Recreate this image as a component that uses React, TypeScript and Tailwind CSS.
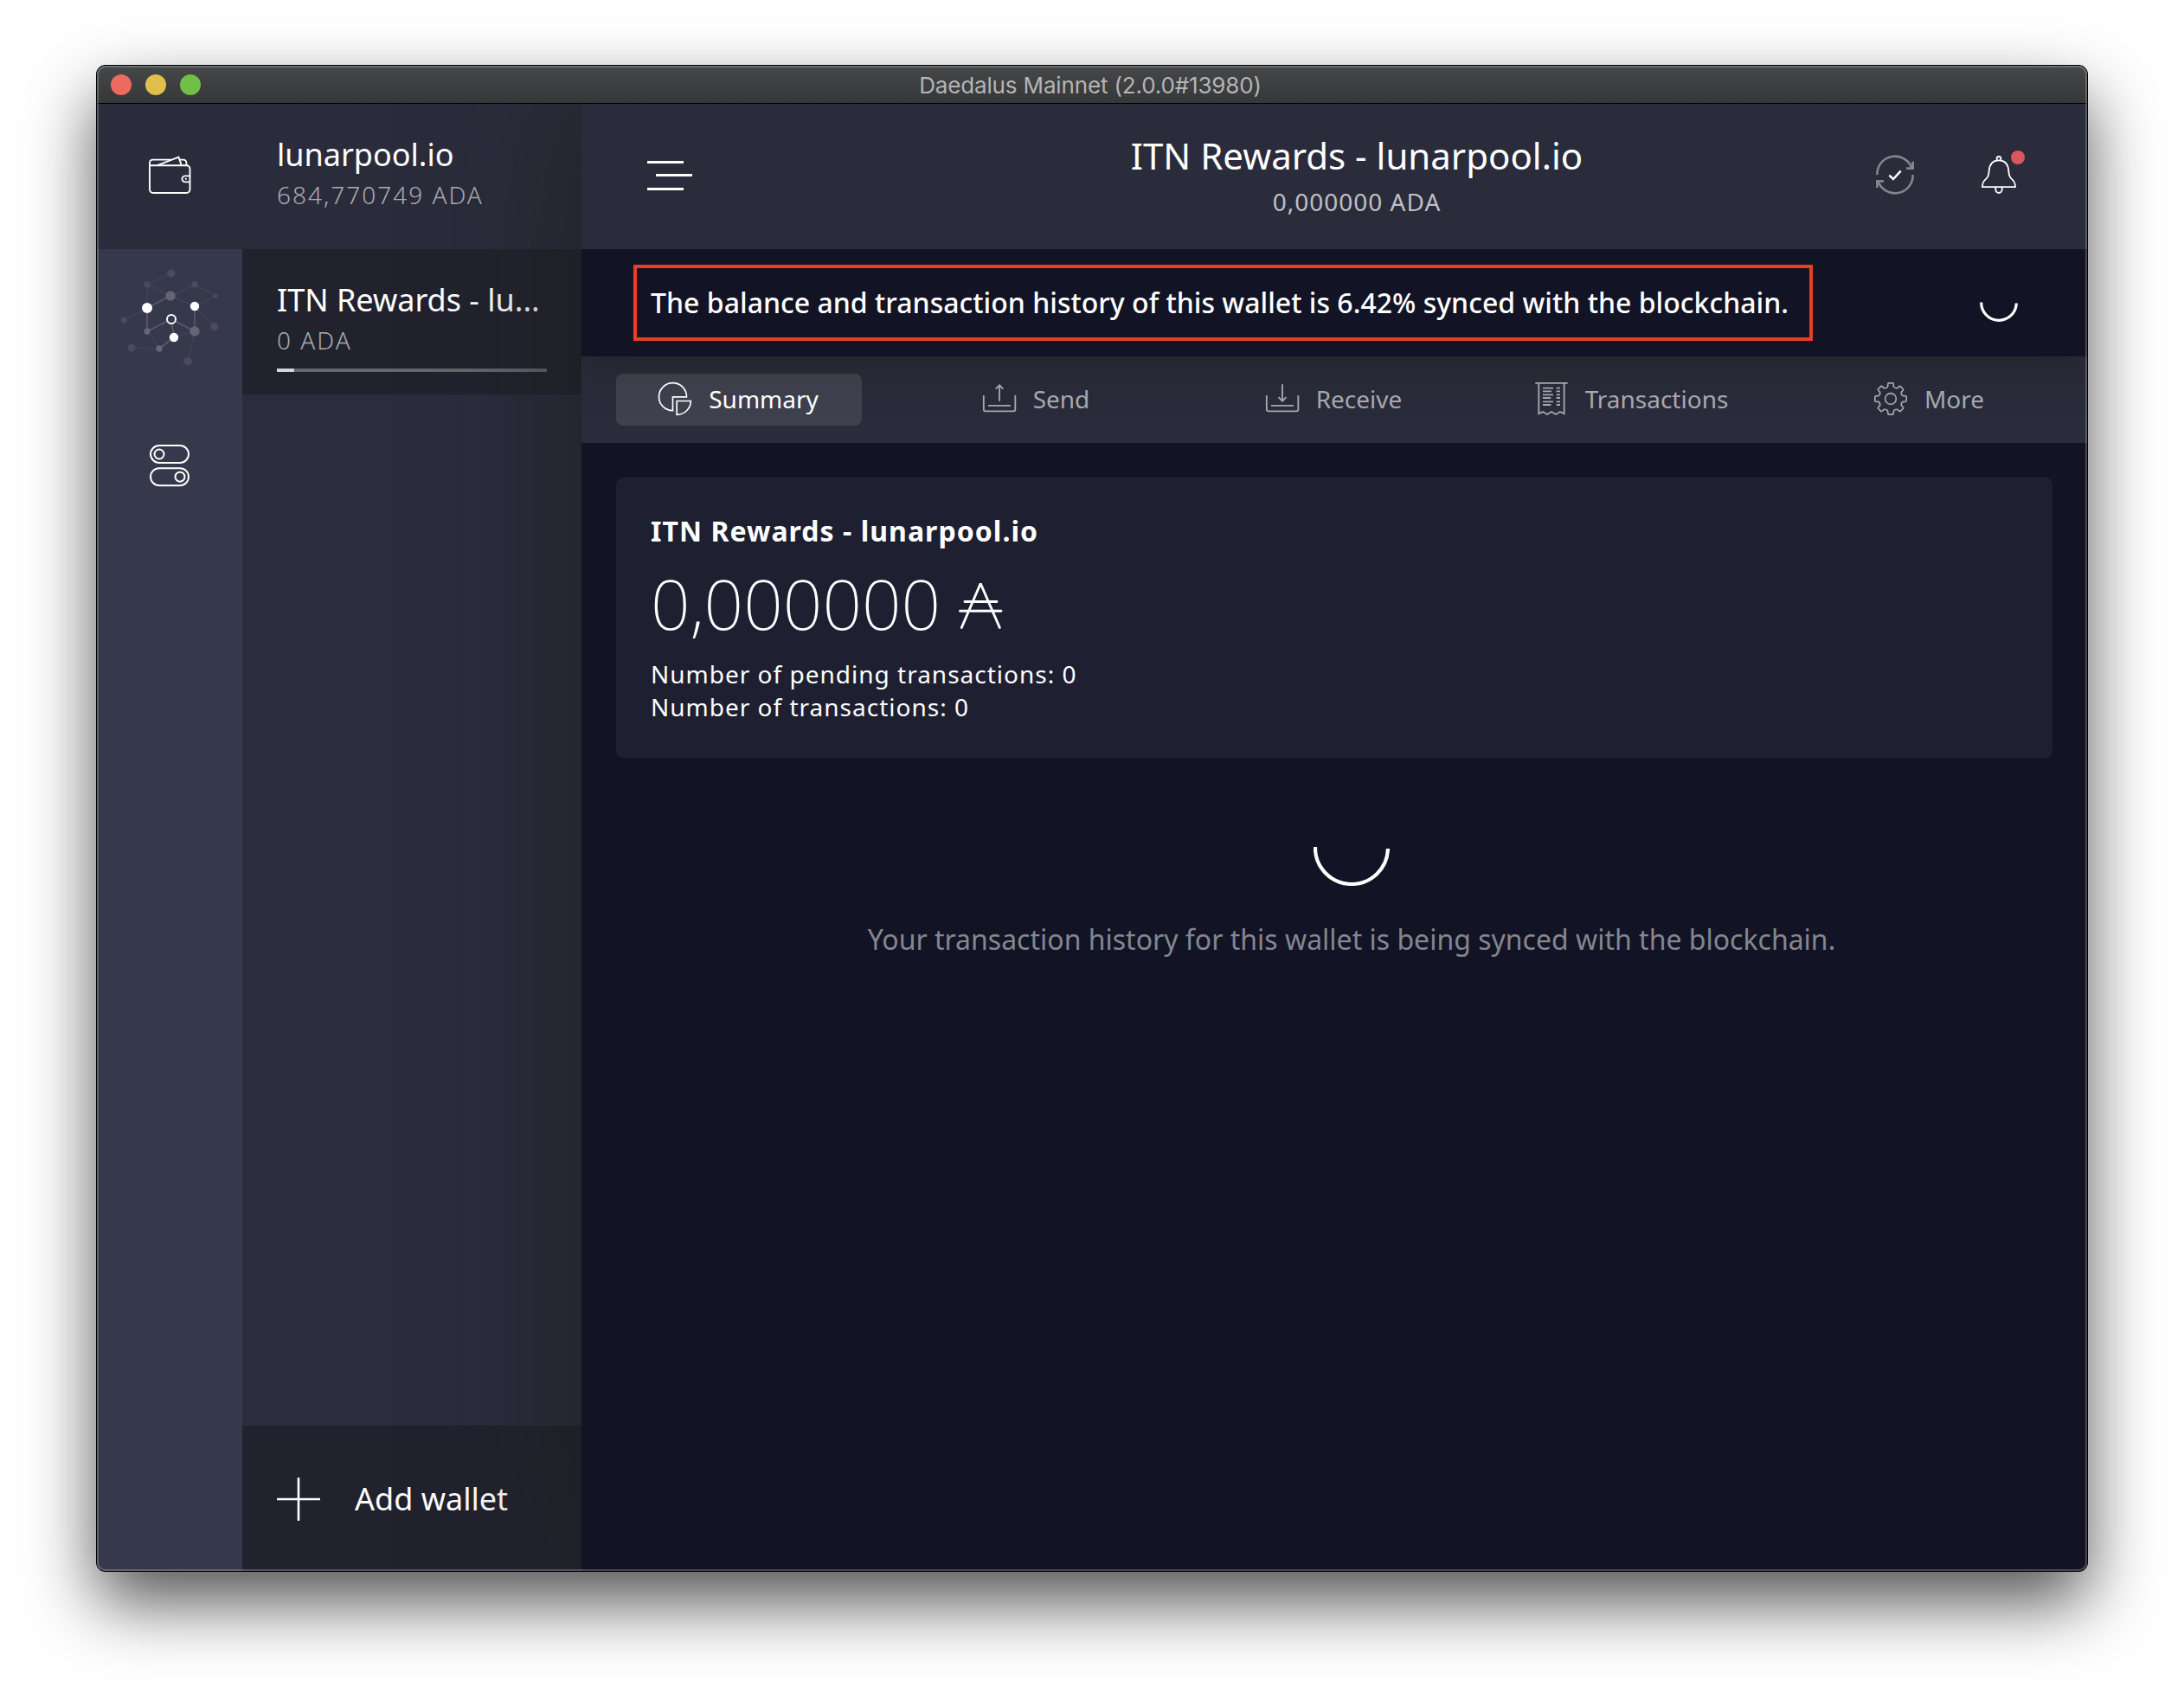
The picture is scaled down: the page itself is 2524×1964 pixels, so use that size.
const gearPath = (() => {
  const cx = 135;
  const cy = 108;
  const at = (r: number, deg: number) => {
    const a = (deg * Math.PI) / 180;
    return `${(cx + r * Math.sin(a)).toFixed(1)} ${(cy - r * Math.cos(a)).toFixed(1)}`;
  };
  const parts: string[] = [];
  for (let i = 0; i < 8; i++) {
    const a = i * 45;
    parts.push(`${i === 0 ? "M" : "L"}${at(44, a - 13)}`);
    parts.push(`Q${at(54, a - 11)} ${at(55, a - 8)}`);
    parts.push(`L${at(55, a + 8)}`);
    parts.push(`Q${at(54, a + 11)} ${at(44, a + 13)}`);
    parts.push(`Q${at(38, a + 22.5)} ${at(44, a + 32)}`);
  }
  return parts.join(" ") + "Z";
})();

function WalletIcon() {
  return (
    <svg className="size-[168px]" viewBox="112 120 168 168" fill="none" stroke="#fff" strokeWidth="1.9" strokeLinejoin="round">
      <path d="M173 191.3H215.5a4 4 0 0 1 4 4V219a4 4 0 0 1-4 4H177a4 4 0 0 1-4-4V188a3.4 3.4 0 0 1 3.4-3.4H198" />
      <path d="M182.5 190.8L206.4 181.6L209.6 190.8" />
      <path d="M207.5 184.6H212a3.4 3.4 0 0 1 3.4 3.4V191" />
      <path d="M219.5 203.4H214a3.5 3.5 0 0 0 0 7H219.5" />
      <circle cx="214.8" cy="206.8" r="1.1" fill="#fff" stroke="none" />
    </svg>
  );
}

function NetworkIcon() {
  return (
    <svg className="size-[168px]" viewBox="36 24 504 504" fill="none">
      <g stroke="#3f4155" strokeWidth="5">
        <path d="M293 108L210 147L291 186M210 147V228M291 186L375 147L447 186L375 222L291 186M130 270L210 228M375 222L443 293M156 366L252 369L210 309M303 330L375 309L351 413" />
      </g>
      <g stroke="#5a5b6d" strokeWidth="5">
        <path d="M291 186L210 228V309L294 267L375 309V222M294 267L303 330L252 369" />
      </g>
      <g fill="#4a4b5d">
        <circle cx="293" cy="108" r="14" />
        <circle cx="210" cy="147" r="11" />
        <circle cx="375" cy="147" r="11" />
        <circle cx="447" cy="186" r="8" />
        <circle cx="130" cy="270" r="10.5" />
        <circle cx="443" cy="293" r="14" />
        <circle cx="156" cy="366" r="14" />
        <circle cx="351" cy="413" r="14" />
      </g>
      <g fill="#646575">
        <circle cx="291" cy="186" r="17" />
        <circle cx="210" cy="309" r="11" />
        <circle cx="375" cy="309" r="17" />
        <circle cx="252" cy="369" r="11" />
      </g>
      <g fill="#fff">
        <circle cx="210" cy="228" r="18" />
        <circle cx="375" cy="222" r="15.5" />
        <circle cx="303" cy="330" r="15.5" />
      </g>
      <circle cx="294" cy="267" r="15" stroke="#fff" strokeWidth="6" fill="#36384b" />
    </svg>
  );
}

function SettingsIcon() {
  return (
    <svg className="size-[168px]" viewBox="36 528 504 504" fill="none" stroke="#fff" strokeWidth="6">
      <rect x="222" y="705" width="132" height="60" rx="30" />
      <circle cx="252" cy="735" r="16.5" />
      <rect x="222" y="783.5" width="132" height="60" rx="30" />
      <circle cx="324" cy="813.5" r="16.5" />
    </svg>
  );
}

function SyncIcon() {
  return (
    <svg className="h-[168px] w-[120px]" viewBox="240 180 360 504" fill="none">
      <g stroke="#83848e" strokeWidth="8">
        <path d="M358 426A62 62 0 0 1 479 405" />
        <path d="M482 426A62 62 0 0 1 361 447" />
        <path d="M459 404H482V380" />
        <path d="M381 448H358V471" />
      </g>
      <path d="M400 428L414 441L440 413" stroke="#fff" strokeWidth="7.5" />
    </svg>
  );
}

function BellIcon() {
  return (
    <svg className="h-[168px] w-[120px]" viewBox="600 180 360 504" fill="none">
      <g stroke="#fff" strokeWidth="5.5" strokeLinejoin="round">
        <path d="M723 468.500C723 455 725 451 733 443C742 435 745 430 746 412C748 390 760 376 780 376C800 376 812 390 814 412C815 430 818 435 827 443C835 451 837 455 837 468.500Z" />
        <path d="M773 376V370a7 7 0 0 1 14 0V376" />
        <path d="M769 470V478a11 11 0 0 0 22 0V470" />
      </g>
      <circle cx="846" cy="366" r="24" fill="#d9575f" />
    </svg>
  );
}

function SummaryIcon() {
  return (
    <svg className="size-10" viewBox="63 48 120 120" fill="none" stroke="currentColor" strokeWidth="5">
      <path d="M163.500 101.500A48 48 0 1 0 115.500 149V101.500Z" />
      <path d="M129.500 115.500H178A48 48 0 0 1 129.500 163Z" />
    </svg>
  );
}

function SendIcon() {
  return (
    <svg className="size-10" viewBox="1185 48 120 120" fill="none" stroke="currentColor" strokeWidth="5.500">
      <path d="M1190.500 96V145a6 6 0 0 0 6 6H1294a6 6 0 0 0 6-6V96" />
      <path d="M1206 131.500H1284M1245 116V62M1232 74L1245 61L1258 74" />
    </svg>
  );
}

function ReceiveIcon() {
  return (
    <svg className="size-10" viewBox="69 48 120 120" fill="none" stroke="currentColor" strokeWidth="5.500">
      <path d="M74.500 96V145a6 6 0 0 0 6 6H178a6 6 0 0 0 6-6V96" />
      <path d="M90 131.500H168M129 58V115M115.500 102.500L129 116L142.500 102.500" />
    </svg>
  );
}

function TransactionsIcon() {
  return (
    <svg className="size-10" viewBox="999 48 120 120" fill="none" stroke="currentColor" strokeWidth="5.500">
      <path d="M1003 53.500H1115" />
      <path d="M1015 54V160L1029 153L1044 162L1059 153L1074 162L1089 153L1103 160V54" />
      <path d="M1029 71H1065M1029 82H1059M1029 94H1065M1029 105H1057M1029 118H1065M1029 129H1057" />
      <path d="M1076 71H1089M1076 82H1089M1076 94H1089M1076 105H1089M1076 118H1089M1076 129H1089" />
    </svg>
  );
}

function MoreIcon() {
  return (
    <svg className="size-10" viewBox="75 48 120 120" fill="none" stroke="currentColor" strokeWidth="5" strokeLinejoin="round">
      <path d={gearPath} />
      <circle cx="135" cy="108" r="19" />
    </svg>
  );
}

function AdaSymbol() {
  return (
    <svg className="mt-[5px] h-[56px] w-[52px]" viewBox="1107 673 52 56" fill="none" stroke="#fff" strokeWidth="2.900" strokeLinecap="round">
      <path d="M1111.300 726.500L1133.200 675.500L1155.300 726.500" strokeLinejoin="bevel" />
      <path d="M1115 696.500H1152M1109.500 707.300H1157" />
    </svg>
  );
}

const tabs = [
  { label: "Summary", Icon: SummaryIcon, active: true },
  { label: "Send", Icon: SendIcon, active: false },
  { label: "Receive", Icon: ReceiveIcon, active: false },
  { label: "Transactions", Icon: TransactionsIcon, active: false },
  { label: "More", Icon: MoreIcon, active: false },
];

function TitleBar() {
  return (
    <div className="relative z-10 flex h-11 shrink-0 items-center border-b border-black bg-linear-to-b from-[#464749] to-[#363738]">
      <div className="flex gap-4 pl-4">
        <span className="size-6 rounded-full bg-[#ed6a5e]" />
        <span className="size-6 rounded-full bg-[#e0c04c]" />
        <span className="size-6 rounded-full bg-[#72bf47]" />
      </div>
      <div className="flex-1 pt-[3px] pr-[124px] text-center font-[Inter] text-[26px] leading-[30px] tracking-[-0.15px] text-[#b4b5b6]">
        Daedalus Mainnet (2.0.0#13980)
      </div>
    </div>
  );
}

function Sidebar() {
  return (
    <aside className="flex w-[560px] shrink-0">
      <div className="flex w-[168px] flex-col bg-[#36384b]">
        <div className="bg-[#2b2c3b]">
          <WalletIcon />
        </div>
        <NetworkIcon />
        <SettingsIcon />
      </div>
      <div className="flex w-[392px] flex-col bg-[#2b2c3d]">
        <div className="bg-[#2b2c3b]">
          <WalletEntry name="lunarpool.io" amount="684,770749 ADA" />
        </div>
        <div className="bg-[#21222d]">
          <WalletEntry name="ITN Rewards - lu..." amount="0 ADA" progress={6.42} />
        </div>
        <div className="mt-auto flex h-[168px] items-center gap-10 bg-[#21222d] pl-10">
          <svg className="mt-px size-[50px]" viewBox="0 0 50 50" stroke="#fff" strokeWidth="2.600" strokeLinecap="round">
            <path d="M25 1V49M1 25H49" />
          </svg>
          <span className="pt-0.5 text-[36px] leading-[48px]">Add wallet</span>
        </div>
      </div>
    </aside>
  );
}

function WalletEntry({ name, amount, progress }: { name: string; amount: string; progress?: number }) {
  return (
    <div className="flex h-[168px] flex-col items-start px-10 pt-[35px]">
      <span className="text-[36px] leading-[48px] whitespace-nowrap">{name}</span>
      <span className="mt-[3px] text-[28px] leading-[38px] font-light tracking-[2px] text-[#aaabaf]">{amount}</span>
      {progress !== undefined && (
        <div className="mt-[14px] h-1 w-[312px] bg-[#65666c]">
          <div className="h-1 bg-[#d4d5d7]" style={{ width: `${progress}%` }} />
        </div>
      )}
    </div>
  );
}

function TopBar() {
  return (
    <header className="relative z-20 flex h-[168px] shrink-0 bg-[#2b2c3b]">
      <div className="flex w-[334px] flex-col pt-[66px] pl-[76px]">
        <span className="h-[3px] w-[42px] bg-white" />
        <span className="mt-3 ml-[10px] h-[3px] w-[42px] bg-white" />
        <span className="mt-[13px] h-[3px] w-[42px] bg-white" />
      </div>
      <div className="flex flex-1 flex-col items-center pt-8">
        <h1 className="text-[42px] leading-[56px]">ITN Rewards - lunarpool.io</h1>
        <p className="mt-[6px] text-[28px] leading-[38px] tracking-[1px] text-[#bfc0c4]">0,000000 ADA</p>
      </div>
      <div className="flex w-[282px]">
        <SyncIcon />
        <BellIcon />
      </div>
    </header>
  );
}

function SyncBanner() {
  return (
    <div className="relative z-10 flex h-[124px] shrink-0 items-center bg-[#121325] pr-20 pl-[60px] shadow-[0_10px_50px_rgba(30,31,32,0.650)]">
      <div className="flex h-[88px] w-[1363px] items-center border-4 border-[#ea3e24] pl-4">
        <span className="text-[32px] leading-[44px] font-medium tracking-[0.015px] whitespace-nowrap">
          The balance and transaction history of this wallet is 6.42% synced with the blockchain.
        </span>
      </div>
      <svg className="ml-auto size-11" viewBox="0 0 44 44" fill="none" stroke="#fff" strokeWidth="3.200">
        <path d="M1.700 21.500A20.300 20.300 0 0 0 42.300 22.500" />
      </svg>
    </div>
  );
}

function NavTabs() {
  return (
    <nav className="flex h-[100px] shrink-0 items-center gap-[60px] bg-[#2b2c3b] px-10">
      {tabs.map(({ label, Icon, active }) => (
        <div
          key={label}
          className={
            active
              ? "relative z-20 flex h-[60px] w-[284px] items-center justify-center gap-[19px] rounded-lg bg-white/10 pr-0.5 pb-0.5 text-white"
              : "relative z-20 flex h-[60px] w-[284px] items-center justify-center gap-[19px] pr-0.5 pb-0.5 text-[#a7a8ae]"
          }
        >
          <Icon />
          <span className="text-[28px] leading-[38px]">{label}</span>
        </div>
      ))}
    </nav>
  );
}

function SummaryPage() {
  return (
    <main className="flex flex-1 flex-col pt-10 pl-10">
      <section className="h-[324px] w-[1660px] rounded-lg bg-[#1e1f31] p-10">
        <h2 className="text-[32px] leading-[44px] font-bold tracking-[1.04px]">ITN Rewards - lunarpool.io</h2>
        <div className="mt-[11px] flex h-[100px] items-center gap-5">
          <span className="text-[80px] leading-[100px] font-extralight">0,000000</span>
          <AdaSymbol />
        </div>
        <p className="mt-[13px] text-[28px] leading-[38px] tracking-[1px]">Number of pending transactions: 0</p>
        <p className="text-[28px] leading-[38px] tracking-[1px]">Number of transactions: 0</p>
      </section>
      <div className="mt-[60px] flex flex-col items-center">
        <svg className="size-[88px]" viewBox="0 0 88 88" fill="none" stroke="#fff" strokeWidth="4.200">
          <path d="M2 43A42 42 0 0 0 86 45" />
        </svg>
        <p className="mt-10 text-[32px] leading-[44px] text-[#85868d]">
          Your transaction history for this wallet is being synced with the blockchain.
        </p>
      </div>
    </main>
  );
}

export default function App() {
  return (
    <div className="h-[1964px] w-[2524px] overflow-hidden bg-white px-28 pt-[76px] font-['Noto_Sans',sans-serif] text-white">
      <div className="relative h-[1740px] w-[2300px] rounded-[10px] shadow-[0_0_0_1px_#000,0_36px_80px_rgba(0,0,0,0.680)]">
        <div className="flex h-full flex-col overflow-hidden rounded-[10px] bg-[#121325]">
          <TitleBar />
          <div className="flex min-h-0 flex-1">
            <Sidebar />
            <div className="relative flex flex-1 flex-col overflow-hidden bg-[#121325] shadow-[-10px_0_140px_rgba(30,31,32,0.800)]">
              <TopBar />
              <SyncBanner />
              <NavTabs />
              <SummaryPage />
            </div>
          </div>
        </div>
        <div className="pointer-events-none absolute inset-0 z-30 rounded-[10px] shadow-[inset_0_0_0_2px_rgba(255,255,255,0.220)]" />
      </div>
    </div>
  );
}
